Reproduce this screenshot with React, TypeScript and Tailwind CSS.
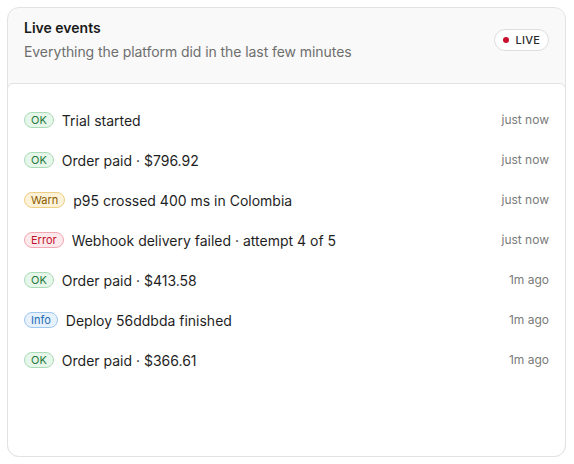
import React from "react";

type Level = "OK" | "Warn" | "Error" | "Info";

const badgeCls: Record<Level, string> = {
  OK: "bg-[#e7f6eb] border-[#a9dcb6] text-[#1e7b3c]",
  Warn: "bg-[#fdf2d8] border-[#eecf86] text-[#8a5b00]",
  Error: "bg-[#fde9eb] border-[#f2a8b2] text-[#c2132f]",
  Info: "bg-[#e6f1fc] border-[#9fc8ef] text-[#1e6db6]",
};

const events: { level: Level; text: string; time: string }[] = [
  { level: "OK", text: "Trial started", time: "just now" },
  { level: "OK", text: "Order paid · $796.92", time: "just now" },
  { level: "Warn", text: "p95 crossed 400 ms in Colombia", time: "just now" },
  { level: "Error", text: "Webhook delivery failed · attempt 4 of 5", time: "just now" },
  { level: "OK", text: "Order paid · $413.58", time: "1m ago" },
  { level: "Info", text: "Deploy 56ddbda finished", time: "1m ago" },
  { level: "OK", text: "Order paid · $366.61", time: "1m ago" },
];

export default function App() {
  return (
    <div
      className="w-[574px] h-[464px] pt-[7px] pl-[7px] pr-[8px] pb-[7px] bg-white"
      style={{ fontFamily: "Inter, 'Liberation Sans', sans-serif" }}
    >
      <div className="h-full flex flex-col rounded-xl border border-[#e2e2e2] bg-[#f9f9f9]">
        <div className="flex items-center justify-between pl-4 pr-4 pt-[10px] pb-[21px]">
          <div className="flex flex-col gap-[4px]">
            <div className="text-[14px] leading-5 font-semibold text-[#1a1a1a]">Live events</div>
            <div className="text-[14px] leading-5 text-[#6e6e6e] tracking-[-0.005em]">
              Everything the platform did in the last few minutes
            </div>
          </div>
          <div className="flex items-center gap-[6px] h-[22px] pl-[8px] pr-[8px] rounded-full border border-[#dedede] bg-white">
            <span className="w-[6px] h-[6px] rounded-full bg-[#c8102e]" />
            <span className="text-[11px] font-medium tracking-[0.02em] text-[#2a2a2a]">LIVE</span>
          </div>
        </div>
        <div className="flex-1 -mx-px -mb-px rounded-t-md rounded-b-xl border border-[#e2e2e2] bg-white pt-4 px-4">
          {events.map((e, i) => (
            <div key={i} className="h-10 flex items-center justify-between">
              <div className="flex items-center gap-[8px]">
                <span
                  className={`px-[6px] rounded-full border text-[11px] leading-[14px] ${badgeCls[e.level]}`}
                >
                  {e.level}
                </span>
                <span className="text-[14px] text-[#1f1f1f]">{e.text}</span>
              </div>
              <span className="text-[12px] text-[#7a7a7a]">{e.time}</span>
            </div>
          ))}
        </div>
      </div>
    </div>
  );
}
